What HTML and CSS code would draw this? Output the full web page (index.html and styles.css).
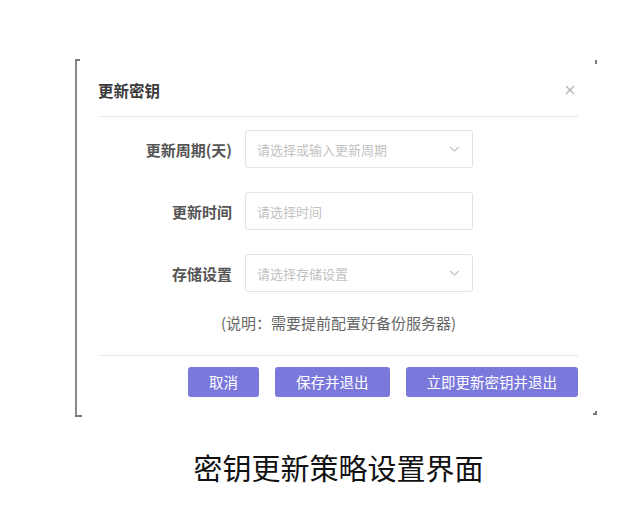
FILE: index.html
```html
<!DOCTYPE html>
<html lang="zh-CN">
<head>
<meta charset="utf-8">
<title>密钥更新策略设置界面</title>
<link rel="stylesheet" href="styles.css">
</head>
<body>
<div class="page">
  <div class="frame">
    <span class="tick tick-tl"></span>
    <span class="tick tick-bl"></span>
    <span class="tick tick-tr"></span>
    <span class="tick tick-br"></span>
    <div class="dlg-header">
      <div class="dlg-title">更新密钥</div>
      <svg class="close" width="10" height="10" viewBox="0 0 10 10"><path d="M1 1L9 9M9 1L1 9" stroke="#b0b0b0" stroke-width="1.2" fill="none"/></svg>
    </div>
    <div class="form">
      <div class="row">
        <label class="label">更新周期(天)</label>
        <div class="input">
          <span class="ph">请选择或输入更新周期</span>
          <svg class="chev" width="11" height="6" viewBox="0 0 11 6"><path d="M1 1L5.5 5L10 1" stroke="#c4c4c4" stroke-width="1.1" fill="none"/></svg>
        </div>
      </div>
      <div class="row">
        <label class="label">更新时间</label>
        <div class="input">
          <span class="ph">请选择时间</span>
        </div>
      </div>
      <div class="row">
        <label class="label">存储设置</label>
        <div class="input">
          <span class="ph">请选择存储设置</span>
          <svg class="chev" width="11" height="6" viewBox="0 0 11 6"><path d="M1 1L5.5 5L10 1" stroke="#c4c4c4" stroke-width="1.1" fill="none"/></svg>
        </div>
      </div>
    </div>
    <div class="note">(说明：需要提前配置好备份服务器)</div>
    <div class="footer">
      <button class="btn">取消</button>
      <button class="btn">保存并退出</button>
      <button class="btn">立即更新密钥并退出</button>
    </div>
  </div>
  <div class="caption">密钥更新策略设置界面</div>
</div>
</body>
</html>
```

FILE: styles.css
```css
html, body {
  margin: 0;
  padding: 0;
  background: #ffffff;
}
body {
  font-family: "Noto Sans CJK SC", "Noto Sans", sans-serif;
}
.page {
  padding: 59px 0 0 75px;
}
.frame {
  position: relative;
  width: 522px;
  height: 358px;
  box-sizing: border-box;
  border-left: 2px solid #8a8a8a;
  padding: 0 19px 0 22px;
}
.tick {
  position: absolute;
  background: #7a7a7a;
}
.tick-tl {
  left: -2px;
  top: 0;
  width: 5px;
  height: 2px;
}
.tick-bl {
  left: -2px;
  bottom: 0;
  width: 7px;
  height: 2px;
}
.tick-tr {
  right: 0;
  top: 1px;
  width: 2px;
  height: 4px;
}
.tick-br {
  right: 0;
  bottom: 2px;
  width: 2px;
  height: 4px;
}
.tick-br::after {
  content: "";
  position: absolute;
  right: 0;
  bottom: 0;
  width: 4px;
  height: 2px;
  background: #7a7a7a;
}
.dlg-header {
  height: 58px;
  box-sizing: border-box;
  padding-top: 4px;
  border-bottom: 1px solid #e8e8e8;
  display: flex;
  align-items: center;
  justify-content: space-between;
}
.dlg-title {
  font-size: 15.5px;
  font-weight: 700;
  color: #3a3a3a;
  margin-left: -1px;
}
.close {
  margin-right: 3px;
}
.form {
  padding-top: 13px;
  display: flex;
  flex-direction: column;
  gap: 24px;
}
.row {
  display: flex;
  align-items: center;
  gap: 13px;
}
.label {
  width: 133px;
  text-align: right;
  font-size: 15px;
  font-weight: 700;
  color: #555555;
}
.input {
  width: 228px;
  height: 38px;
  box-sizing: border-box;
  border: 1px solid #e3e3e3;
  border-radius: 3px;
  display: flex;
  align-items: center;
  justify-content: space-between;
  padding: 0 12px 0 11px;
}
.ph {
  font-size: 13px;
  color: #c2c2c2;
}
.note {
  margin-top: 21px;
  line-height: 20px;
  text-align: center;
  font-size: 15px;
  color: #666666;
}
.footer {
  margin-top: 22px;
  border-top: 1px solid #e8e8e8;
  padding-top: 11px;
  display: flex;
  justify-content: flex-end;
  gap: 16px;
}
.btn {
  height: 30px;
  padding: 0 21px;
  border: none;
  border-radius: 3px;
  background: #7a78db;
  color: #ffffff;
  font-family: "Noto Sans CJK SC", "Noto Sans", sans-serif;
  font-size: 14.5px;
  line-height: 30px;
}
.caption {
  width: 522px;
  box-sizing: border-box;
  padding: 0 19px 0 24px;
  margin-top: 32px;
  text-align: center;
  font-size: 29px;
  line-height: 36px;
  color: #111111;
}
```
